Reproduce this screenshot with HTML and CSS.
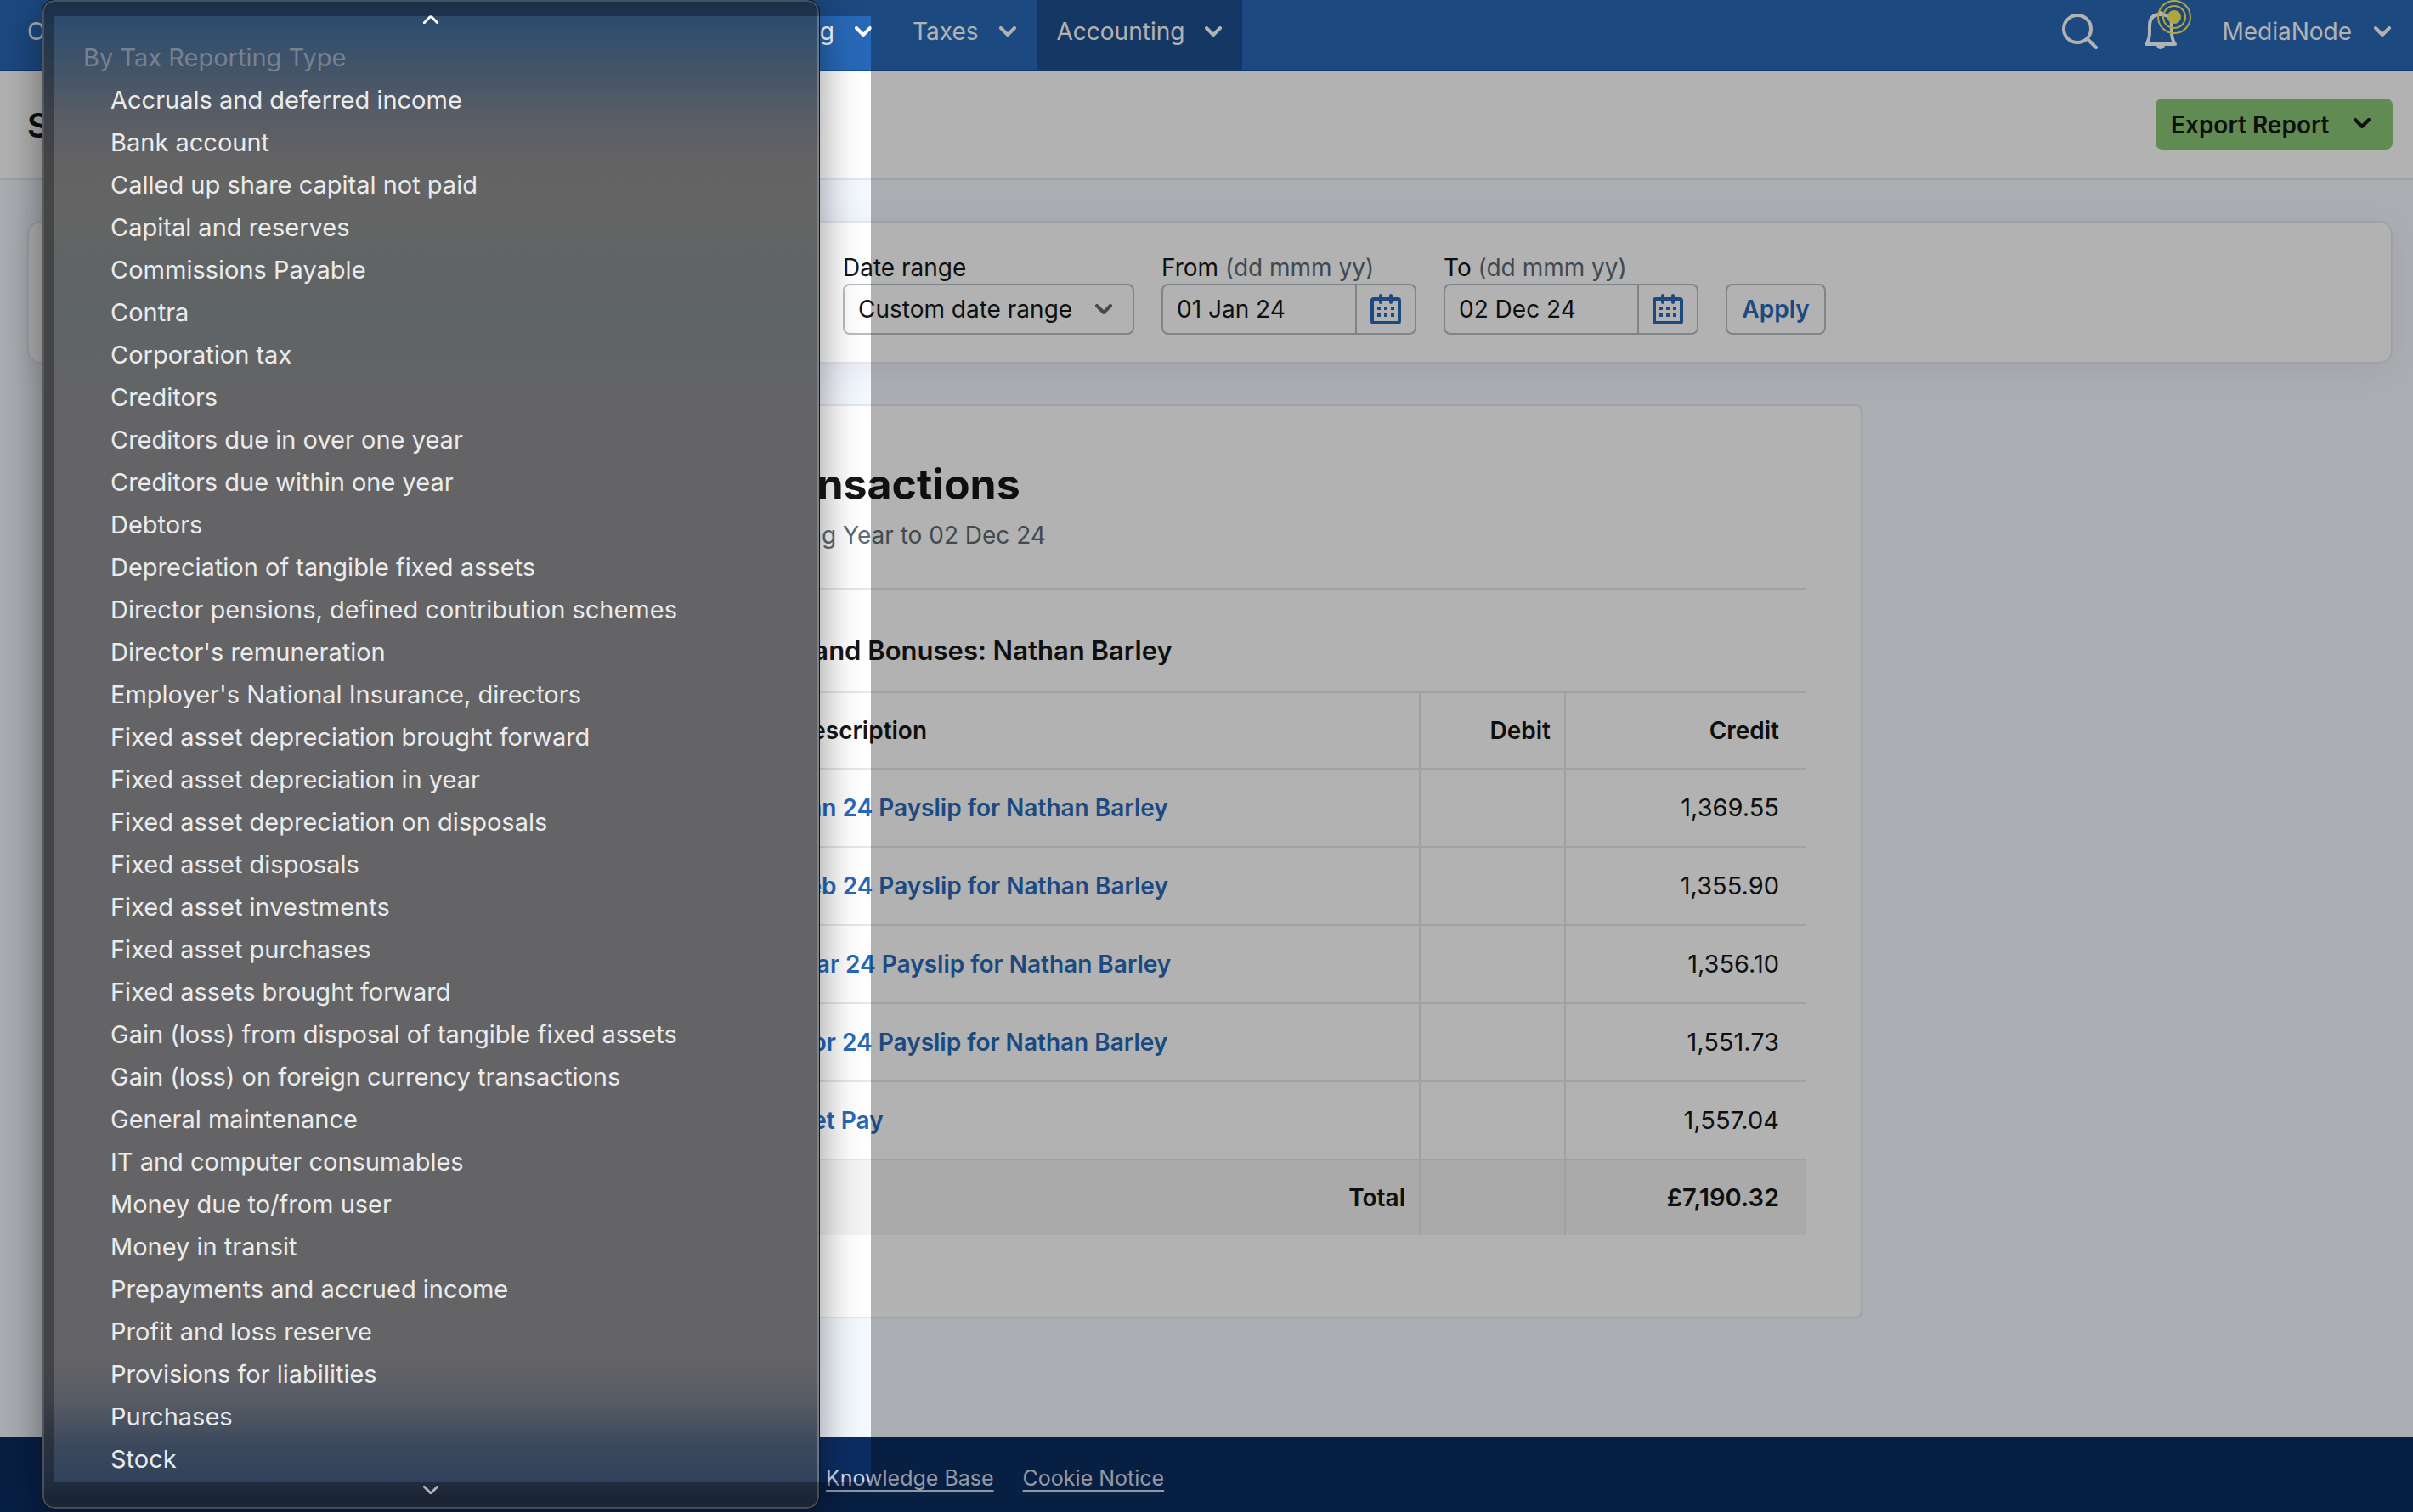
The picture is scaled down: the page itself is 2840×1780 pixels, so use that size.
FILE: index.html
```html
<!DOCTYPE html>
<html lang="en">
<head>
<meta charset="utf-8">
<meta name="viewport" content="width=device-width, initial-scale=1">
<title>Show Transactions</title>
<link rel="stylesheet" href="styles.css">
</head>
<body>
<svg class="symbols" aria-hidden="true">
  <symbol id="chevron" viewBox="0 0 20 12"><path d="M2 2l8 8 8-8" fill="none" stroke="currentColor" stroke-width="4" stroke-linecap="round" stroke-linejoin="round"/></symbol>
  <symbol id="calendar" viewBox="0 0 36 36">
    <path d="M4 4h28a4 4 0 0 1 4 4v24a4 4 0 0 1-4 4H4a4 4 0 0 1-4-4V8a4 4 0 0 1 4-4zm0 4v24h28V8z" fill="currentColor" fill-rule="evenodd"/>
    <path d="M12 2v8M24 2v8" stroke="currentColor" stroke-width="4" stroke-linecap="round"/>
    <path d="M8 15h4v4H8zM16 15h4v4h-4zM24 15h4v4h-4zM8 23h4v4H8zM16 23h4v4h-4zM24 23h4v4h-4z" fill="currentColor"/>
  </symbol>
</svg>

<header class="topbar">
  <nav class="nav" aria-label="Main">
    <div class="nav-group">
      <a class="nav-item" href="#">Overview</a>
      <a class="nav-item" href="#">Contacts</a>
      <a class="nav-item" href="#">My Money</a>
      <a class="nav-item" href="#">Work</a>
      <a class="nav-item" href="#">Banking <svg class="chevron"><use href="#chevron"/></svg></a>
    </div>
    <a class="nav-item" href="#">Taxes <svg class="chevron"><use href="#chevron"/></svg></a>
    <a class="nav-item nav-item-active" href="#">Accounting <svg class="chevron"><use href="#chevron"/></svg></a>
  </nav>
  <div class="account">
    <button class="icon-button" type="button" aria-label="Search">
      <svg class="search-icon" viewBox="0 0 42 42"><circle cx="18" cy="18" r="16"/><path d="M30 30l10 10"/></svg>
    </button>
    <button class="icon-button" type="button" aria-label="Notifications">
      <svg class="bell-icon" viewBox="0 0 56 74">
        <path class="bell-body" d="M3 52C6 48 7 44 7 38V30C7 21 12 17 20 17s13 4 13 13v8c0 6 1 10 4 14z"/>
        <path class="bell-solid" d="M15 53h10a5 5 0 0 1-10 0zM17 16a3 3 0 0 1 6 0z"/>
        <circle class="ring" cx="36" cy="20" r="19"/><circle class="ring" cx="36" cy="20" r="13"/><circle class="dot" cx="36" cy="20" r="8"/>
      </svg>
    </button>
    <button class="account-button" type="button">MediaNode <svg class="chevron"><use href="#chevron"/></svg></button>
  </div>
</header>

<div class="title-bar">
  <h1 class="page-title">Show Transactions</h1>
  <button class="export-button" type="button">Export Report <svg class="chevron"><use href="#chevron"/></svg></button>
</div>

<main class="content">
  <form class="filters">
    <div class="field field-category">
      <label for="category">Show transactions for</label>
      <div class="select-wrap"><select id="category"><option>Salaries and Bonuses</option></select><svg class="chevron"><use href="#chevron"/></svg></div>
    </div>
    <div class="field field-range">
      <label for="range">Date range</label>
      <div class="select-wrap"><select id="range"><option>Custom date range</option></select><svg class="chevron"><use href="#chevron"/></svg></div>
    </div>
    <div class="field field-date">
      <label for="from">From <span class="muted">(dd mmm yy)</span></label>
      <div class="date-box"><input id="from" type="text" value="01 Jan 24"><button type="button" aria-label="Choose from date"><svg class="calendar"><use href="#calendar"/></svg></button></div>
    </div>
    <div class="field field-date">
      <label for="to">To <span class="muted">(dd mmm yy)</span></label>
      <div class="date-box"><input id="to" type="text" value="02 Dec 24"><button type="button" aria-label="Choose to date"><svg class="calendar"><use href="#calendar"/></svg></button></div>
    </div>
    <button class="apply-button" type="button">Apply</button>
  </form>

  <section class="report">
    <header class="report-head">
      <h2>Show Transactions</h2>
      <p class="muted">Annual Accounting Year to 02 Dec 24</p>
    </header>
    <h3>Gross Salaries and Bonuses: Nathan Barley</h3>
    <table>
      <colgroup><col class="col-date"><col><col class="col-debit"><col class="col-credit"></colgroup>
      <thead><tr><th>Date</th><th>Description</th><th class="num">Debit</th><th class="num">Credit</th></tr></thead>
      <tbody>
        <tr><td>25 Jan 24</td><td><a href="#">Jan 24 Payslip for Nathan Barley</a></td><td class="num"></td><td class="num">1,369.55</td></tr>
        <tr><td>25 Feb 24</td><td><a href="#">Feb 24 Payslip for Nathan Barley</a></td><td class="num"></td><td class="num">1,355.90</td></tr>
        <tr><td>25 Mar 24</td><td><a href="#">Mar 24 Payslip for Nathan Barley</a></td><td class="num"></td><td class="num">1,356.10</td></tr>
        <tr><td>25 Apr 24</td><td><a href="#">Apr 24 Payslip for Nathan Barley</a></td><td class="num"></td><td class="num">1,551.73</td></tr>
        <tr><td>25 May 24</td><td><a href="#">Net Pay</a></td><td class="num"></td><td class="num">1,557.04</td></tr>
      </tbody>
      <tfoot><tr><th class="total-label" colspan="2">Total</th><td class="num"></td><td class="num">£7,190.32</td></tr></tfoot>
    </table>
  </section>
</main>

<footer class="footer">
  <a href="#">Knowledge Base</a>
  <a href="#">Cookie Notice</a>
</footer>

<div class="menu">
  <div class="menu-arrow menu-arrow-up"><svg viewBox="0 0 18 10"><path d="M1 9l8-8 8 8"/></svg></div>
  <div class="menu-heading" id="menu-heading">By Tax Reporting Type</div>
  <ul class="menu-list" role="listbox" aria-labelledby="menu-heading">
    <li role="option">Accruals and deferred income</li>
    <li role="option">Bank account</li>
    <li role="option">Called up share capital not paid</li>
    <li role="option">Capital and reserves</li>
    <li role="option">Commissions Payable</li>
    <li role="option">Contra</li>
    <li role="option">Corporation tax</li>
    <li role="option">Creditors</li>
    <li role="option">Creditors due in over one year</li>
    <li role="option">Creditors due within one year</li>
    <li role="option">Debtors</li>
    <li role="option">Depreciation of tangible fixed assets</li>
    <li role="option">Director pensions, defined contribution schemes</li>
    <li role="option">Director's remuneration</li>
    <li role="option">Employer's National Insurance, directors</li>
    <li role="option">Fixed asset depreciation brought forward</li>
    <li role="option">Fixed asset depreciation in year</li>
    <li role="option">Fixed asset depreciation on disposals</li>
    <li role="option">Fixed asset disposals</li>
    <li role="option">Fixed asset investments</li>
    <li role="option">Fixed asset purchases</li>
    <li role="option">Fixed assets brought forward</li>
    <li role="option">Gain (loss) from disposal of tangible fixed assets</li>
    <li role="option">Gain (loss) on foreign currency transactions</li>
    <li role="option">General maintenance</li>
    <li role="option">IT and computer consumables</li>
    <li role="option">Money due to/from user</li>
    <li role="option">Money in transit</li>
    <li role="option">Prepayments and accrued income</li>
    <li role="option">Profit and loss reserve</li>
    <li role="option">Provisions for liabilities</li>
    <li role="option">Purchases</li>
    <li role="option">Stock</li>
  </ul>
  <div class="menu-arrow menu-arrow-down"><svg viewBox="0 0 18 10"><path d="M1 1l8 8 8-8"/></svg></div>
</div>
<div class="spotlight"></div>
</body>
</html>
```
FILE: styles.css
```css
*, *::before, *::after { box-sizing: border-box; }

:root {
  --blue: #2769b8;
  --blue-dark: #1d5090;
  --ink: #151718;
  --muted: #5e6b75;
  --line: #e5e7ec;
  --control: #b6bec4;
}

body {
  position: relative;
  display: flex;
  flex-direction: column;
  min-height: 100vh;
  margin: 0;
  background: #f4f8ff;
  color: var(--ink);
  font: 400 28px/36px Inter, "Liberation Sans", sans-serif;
}

h1, h2, h3, p, ul { margin: 0; padding: 0; }
a { color: var(--blue); text-decoration: none; }
button, input, select { margin: 0; color: inherit; font: inherit; }
button { cursor: pointer; }
.muted { color: var(--muted); }
.symbols { position: absolute; width: 0; height: 0; }
.chevron { flex: none; width: 20px; height: 12px; }

/* Top navigation */
.topbar {
  display: flex;
  justify-content: space-between;
  height: 84px;
  padding: 0 26px 0 8px;
  border-bottom: 2px solid #1a5298;
  background: var(--blue);
}
.nav { display: flex; }
.nav-group { display: flex; justify-content: space-between; width: 1042px; }
.nav-item {
  display: flex;
  align-items: center;
  gap: 24px;
  padding: 0 24px 8px;
  color: #fff;
}
.nav-item-active { background: var(--blue-dark); }
.account { display: flex; align-items: center; padding-bottom: 8px; }
.icon-button, .account-button { padding: 0; border: 0; background: none; color: #fff; }
.icon-button svg { display: block; }
.account-button { display: flex; align-items: center; gap: 26px; margin-left: 36px; }
.search-icon { width: 42px; height: 42px; margin-right: 54px; fill: none; stroke: #fff; stroke-width: 4; stroke-linecap: round; }
.bell-icon { width: 56px; height: 74px; }
.bell-body { fill: none; stroke: #fff; stroke-width: 4; stroke-linejoin: round; }
.bell-solid { fill: #fff; }
.ring { fill: none; stroke: #fbee5b; stroke-width: 2; }
.dot { fill: #fbee5b; }

/* Page title */
.title-bar {
  display: flex;
  align-items: flex-start;
  justify-content: space-between;
  padding: 32px 24px 30px 32px;
  border-bottom: 2px solid var(--line);
  background: #fff;
}
.page-title { font-size: 39px; font-weight: 600; line-height: 64px; }
.export-button {
  display: flex;
  align-items: center;
  justify-content: space-between;
  width: 279px;
  height: 60px;
  padding: 2px 26px 0 18px;
  border: 0;
  border-radius: 8px;
  background: #8ac878;
  font-weight: 600;
}
.export-button .chevron { margin-bottom: 4px; }

/* Filters */
.content { flex: 1; padding: 48px 24px 48px 32px; }
.filters {
  display: flex;
  align-items: flex-end;
  gap: 32px;
  padding: 36px 30px 32px;
  border: 2px solid var(--line);
  border-radius: 16px;
  background: #fff;
  box-shadow: 0 8px 40px rgba(30, 20, 60, .06);
}
.field { display: flex; flex-direction: column; gap: 2px; }
.field label { line-height: 34px; }
.field-category { width: 896px; }
.field-range { width: 343px; }
.field-date { width: 300px; }
.select-wrap { display: grid; align-items: center; }
.select-wrap > * { grid-area: 1 / 1; }
.select-wrap .chevron { justify-self: end; margin-right: 26px; color: var(--muted); pointer-events: none; }
select, .date-box, .apply-button {
  height: 60px;
  border: 2px solid var(--control);
  border-radius: 8px;
  background: #fff;
}
select { width: 100%; padding: 0 16px; appearance: none; }
.date-box { display: flex; overflow: hidden; }
.date-box input { flex: 1; min-width: 0; padding: 0 16px; border: 0; background: none; }
.date-box button {
  display: grid;
  place-items: center;
  width: 70px;
  padding: 0;
  border: 0;
  border-left: 2px solid var(--control);
  background: none;
  color: var(--blue);
}
.calendar { width: 36px; height: 36px; }
.apply-button { width: 118px; padding: 0; color: var(--blue); font-weight: 600; }

/* Report */
.report {
  max-width: 1536px;
  margin: 48px auto 0;
  padding: 62px 64px 96px 76px;
  border: 2px solid var(--line);
  border-radius: 8px;
  background: #fff;
}
.report-head { padding-bottom: 44px; border-bottom: 2px solid var(--line); }
h2 { margin-bottom: 12px; font-size: 50px; font-weight: 700; line-height: 60px; }
h3 { margin: 52px 0 28px; font-size: 31px; font-weight: 600; line-height: 40px; }
table { width: 100%; border-spacing: 0; table-layout: fixed; }
.col-date { width: 185px; }
.col-debit { width: 171px; }
.col-credit { width: 285px; }
th, td { padding: 28px 16px; border-top: 2px solid var(--line); line-height: 32px; text-align: left; }
th { font-weight: 600; }
tbody td { padding-block: 29px; }
td a { font-weight: 600; }
.num { border-left: 2px solid var(--line); text-align: right; }
td.num { font-size: 29px; }
.num:last-child { padding-right: 32px; }
.total-label { text-align: right; }
tfoot th, tfoot td { background: #f4f4f4; font-weight: 600; }

/* Footer */
.footer {
  display: flex;
  gap: 34px;
  padding: 30px 32px 22px 972px;
  background: #0c2d62;
  font-size: 25px;
}
.footer a { color: #d3dbe6; text-decoration: underline; text-underline-offset: 5px; text-decoration-thickness: 2px; }

/* Open drop-down list */
.menu {
  position: absolute;
  top: 0;
  left: 50px;
  width: 914px;
  border: 2px solid rgba(150, 155, 160, .55);
  border-radius: 14px;
  outline: 1px solid #10151b;
  background: linear-gradient(#25456a 0, #2f4e6e 30px, #435468 84px, #575c66 130px, #626264 180px, #646564 240px, #5f6466 360px, #646466 480px, #646466 1600px, #575b65 1650px, #3c495c 1700px, #30415c 1744px, #28364c 1762px);
  background-origin: border-box;
  box-shadow: 0 10px 50px rgba(0, 0, 0, .45);
  color: #ebebeb;
  font-size: 29px;
  line-height: 50px;
}
.menu-heading { padding-left: 46px; color: #76828f; }
.menu-list { list-style: none; }
.menu-list li { padding-left: 78px; }
.menu-arrow { display: flex; justify-content: center; }
.menu-arrow svg { width: 18px; height: 10px; fill: none; stroke: #fff; stroke-width: 3; stroke-linecap: round; stroke-linejoin: round; }
.menu-arrow-up { padding: 16px 0 15px; }
.menu-arrow-down { padding: 6px 0 15px; }

/* Dims everything outside the highlighted area */
.spotlight {
  position: absolute;
  top: 19px;
  left: 64px;
  width: 961px;
  height: 1726px;
  box-shadow: 0 0 0 3000px rgba(0, 0, 0, .3);
  clip-path: inset(-19px -1815px -35px -64px);
  pointer-events: none;
}
```
